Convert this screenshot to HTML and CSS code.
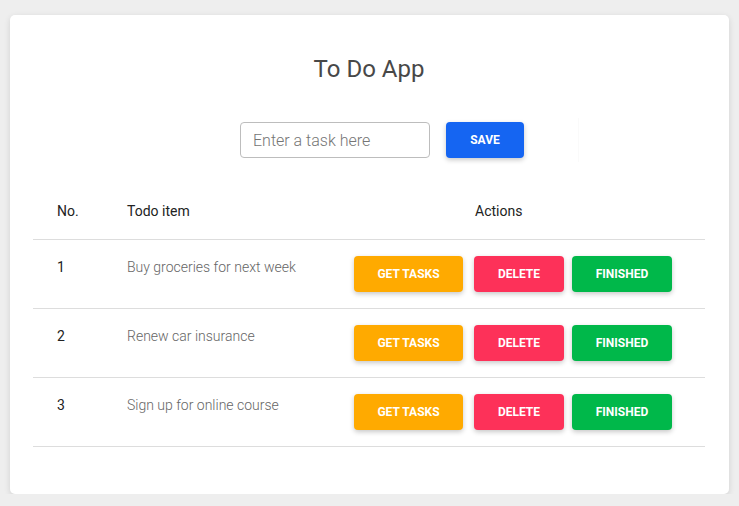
FILE: index.html
```html
<!DOCTYPE html>
<html lang="en">
<head>
<meta charset="utf-8">
<title>To Do App</title>
<link rel="stylesheet" href="styles.css">
</head>
<body>
<div class="card">
  <h1 class="title">To Do App</h1>
  <div class="form">
    <input class="task-input" type="text" placeholder="Enter a task here">
    <button class="btn btn-save">Save</button>
    <div class="ghost"></div>
  </div>
  <div class="table">
    <div class="row head">
      <div class="c-no">No.</div>
      <div class="c-item">Todo item</div>
      <div class="c-actions-head">Actions</div>
    </div>
    <div class="row">
      <div class="c-no">1</div>
      <div class="c-item light">Buy groceries for next week</div>
      <div class="c-actions">
        <button class="btn btn-get">Get tasks</button>
        <button class="btn btn-del">Delete</button>
        <button class="btn btn-fin">Finished</button>
      </div>
    </div>
    <div class="row">
      <div class="c-no">2</div>
      <div class="c-item light">Renew car insurance</div>
      <div class="c-actions">
        <button class="btn btn-get">Get tasks</button>
        <button class="btn btn-del">Delete</button>
        <button class="btn btn-fin">Finished</button>
      </div>
    </div>
    <div class="row">
      <div class="c-no">3</div>
      <div class="c-item light">Sign up for online course</div>
      <div class="c-actions">
        <button class="btn btn-get">Get tasks</button>
        <button class="btn btn-del">Delete</button>
        <button class="btn btn-fin">Finished</button>
      </div>
    </div>
  </div>
</div>
</body>
</html>
```

FILE: styles.css
```css
html, body {
  margin: 0;
  padding: 0;
  background: #eeeeee;
  font-family: Roboto, "Liberation Sans", sans-serif;
}
.card {
  box-sizing: border-box;
  width: 719px;
  height: 479px;
  margin: 15px 10px 0;
  padding: 40px 24px 0 23px;
  background: #ffffff;
  border-radius: 5px;
  box-shadow: 0 2px 6px rgba(0, 0, 0, 0.12);
}
.title {
  margin: 0;
  font-size: 24px;
  line-height: 28px;
  font-weight: 400;
  color: #484848;
  text-align: center;
}
.form {
  display: flex;
  align-items: center;
  margin: 39px 0 0 207px;
  height: 36px;
}
.task-input {
  box-sizing: border-box;
  width: 190px;
  height: 36px;
  padding: 0 12px;
  border: 1px solid #bdbdbd;
  border-radius: 4px;
  font-family: Roboto, "Liberation Sans", sans-serif;
  font-size: 16px;
  font-weight: 300;
  color: #333;
  outline: none;
}
.task-input::placeholder {
  color: #757575;
  font-weight: 300;
}
.btn {
  box-sizing: border-box;
  height: 36px;
  border: none;
  border-radius: 4px;
  color: #ffffff;
  font-family: Roboto, "Liberation Sans", sans-serif;
  font-size: 12px;
  font-weight: 700;
  text-transform: uppercase;
  padding: 0;
  box-shadow: 0 2px 5px rgba(0, 0, 0, 0.22);
  cursor: pointer;
}
.btn-save {
  width: 78px;
  margin-left: 16px;
  background: #1565f2;
}
.ghost {
  width: 54px;
  height: 44px;
  box-shadow: 1px 0 1px rgba(0, 0, 0, 0.02);
}
.table {
  margin-top: 25px;
}
.row {
  display: flex;
  align-items: center;
  height: 69px;
  box-sizing: border-box;
  border-bottom: 1px solid #dddddd;
  font-size: 14px;
  color: #222222;
}
.row.head {
  height: 57px;
  padding-bottom: 1px;
}
.c-no {
  width: 94px;
  padding-left: 24px;
  box-sizing: border-box;
  flex: none;
}
.c-item {
  width: 227px;
  flex: none;
}
.row:not(.head) .c-no,
.row:not(.head) .c-item {
  align-self: flex-start;
  padding-top: 18px;
  line-height: 18px;
}
.light {
  font-weight: 300;
  color: #666666;
}
.c-actions-head {
  padding-left: 121px;
}
.c-actions {
  display: flex;
  align-items: center;
}
.btn-get {
  width: 109px;
  background: #ffaa00;
}
.btn-del {
  width: 90px;
  margin-left: 11px;
  background: #fd3159;
}
.btn-fin {
  width: 100px;
  margin-left: 8px;
  background: #00b84a;
}
```
